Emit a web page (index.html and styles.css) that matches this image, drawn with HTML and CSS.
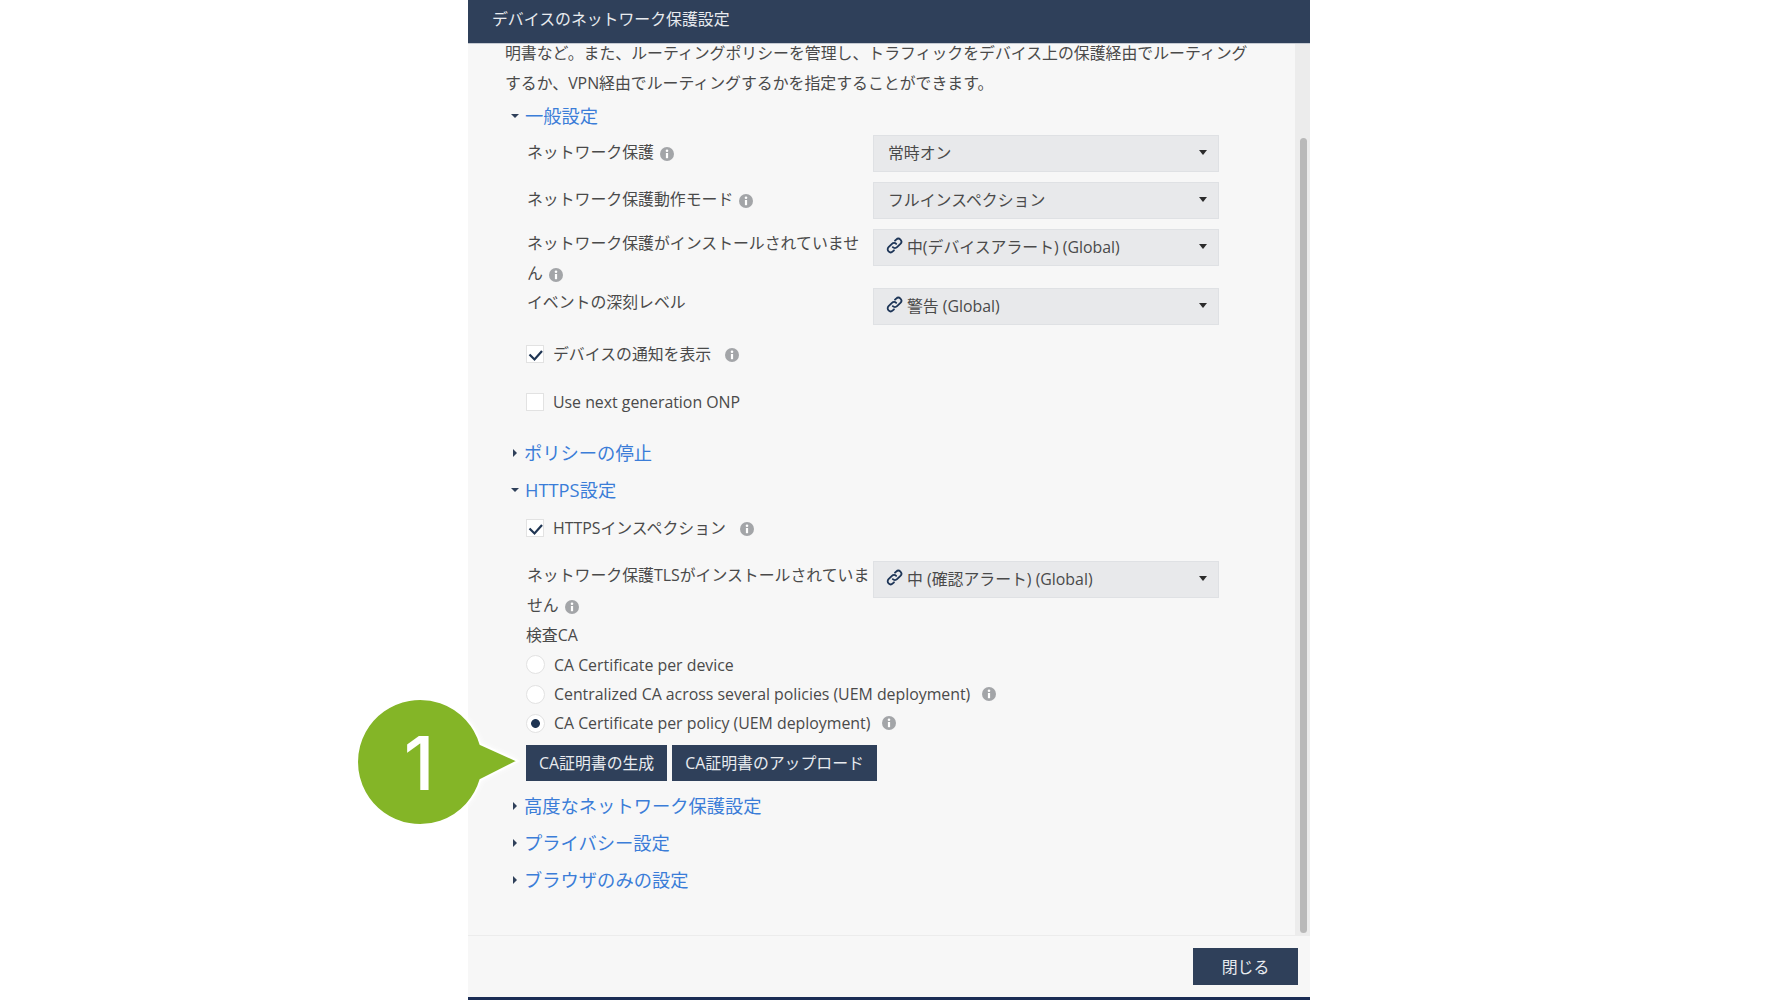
FILE: index.html
```html
<!DOCTYPE html>
<html lang="ja">

<head>
  <meta charset="UTF-8" />
  <title>デバイスのネットワーク保護設定</title>
  <link rel="stylesheet" href="styles.css">
</head>

<body>
  <svg class="sprite" width="0" height="0">
    <symbol id="info" viewBox="0 0 14 14">
      <circle cx="7" cy="7" r="7" fill="#a3a5a8" />
      <circle cx="7" cy="3.8" r="1.3" fill="#fff" />
      <rect x="5.9" y="6" width="2.2" height="5.2" fill="#fff" />
    </symbol>
    <symbol id="link" viewBox="0 0 16 16">
      <g fill="none" stroke="#1d3557" stroke-width="1.7" stroke-linecap="round">
        <path d="M6.4 9.6a2.8 2.8 0 0 0 4 0l3.2-3.2a2.8 2.8 0 0 0-4-4l-1.1 1.1" />
        <path d="M9.6 6.4a2.8 2.8 0 0 0-4 0l-3.2 3.2a2.8 2.8 0 0 0 4 4l1.1-1.1" />
      </g>
    </symbol>
    <symbol id="check" viewBox="0 0 16 16">
      <path d="M2.5 8.5L7.5 13.5L15 5" fill="none" stroke="#1f3553" stroke-width="2.2" />
    </symbol>
  </svg>

  <div class="dialog">
    <div class="dialog-header">デバイスのネットワーク保護設定</div>

    <div class="dialog-body">
      <div class="scroll-content">
        <p class="intro">明書など。また、ルーティングポリシーを管理し、トラフィックをデバイス上の保護経由でルーティング<br>するか、VPN経由でルーティングするかを指定することができます。</p>

        <div class="section-head"><span class="caret-open"></span><a>一般設定</a></div>

        <div class="form-row">
          <div class="form-label form-label-center">ネットワーク保護 <svg class="info"><use href="#info" /></svg></div>
          <div class="select"><span class="select-text">常時オン</span></div>
        </div>
        <div class="form-row">
          <div class="form-label form-label-center">ネットワーク保護動作モード <svg class="info"><use href="#info" /></svg></div>
          <div class="select"><span class="select-text">フルインスペクション</span></div>
        </div>
        <div class="form-row">
          <div class="form-label">ネットワーク保護がインストールされていません <svg class="info"><use href="#info" /></svg></div>
          <div class="select"><svg class="link-icon"><use href="#link" /></svg><span class="select-text">中(デバイスアラート) (Global)</span></div>
        </div>
        <div class="form-row">
          <div class="form-label">イベントの深刻レベル</div>
          <div class="select"><svg class="link-icon"><use href="#link" /></svg><span class="select-text">警告 (Global)</span></div>
        </div>

        <div class="check-row">
          <span class="checkbox"><svg><use href="#check" /></svg></span>
          <span>デバイスの通知を表示</span>
          <svg class="info info-wide"><use href="#info" /></svg>
        </div>
        <div class="check-row">
          <span class="checkbox"></span>
          <span>Use next generation ONP</span>
        </div>

        <div class="section-head section-gap"><span class="caret-closed"></span><a>ポリシーの停止</a></div>
        <div class="section-head"><span class="caret-open"></span><a>HTTPS設定</a></div>

        <div class="check-row">
          <span class="checkbox"><svg><use href="#check" /></svg></span>
          <span>HTTPSインスペクション</span>
          <svg class="info info-wide"><use href="#info" /></svg>
        </div>

        <div class="form-row form-row-tls">
          <div class="form-label">ネットワーク保護TLSがインストールされていません <svg class="info"><use href="#info" /></svg></div>
          <div class="select"><svg class="link-icon"><use href="#link" /></svg><span class="select-text">中 (確認アラート) (Global)</span></div>
        </div>

        <div class="radio-title">検査CA</div>
        <div class="radio-row"><span class="radio"></span><span>CA Certificate per device</span></div>
        <div class="radio-row"><span class="radio"></span><span>Centralized CA across several policies (UEM deployment)</span><svg class="info info-radio"><use href="#info" /></svg></div>
        <div class="radio-row"><span class="radio radio-on"></span><span>CA Certificate per policy (UEM deployment)</span><svg class="info info-radio"><use href="#info" /></svg></div>

        <div class="button-row">
          <button class="btn">CA証明書の生成</button>
          <button class="btn">CA証明書のアップロード</button>
        </div>

        <div class="section-head"><span class="caret-closed"></span><a>高度なネットワーク保護設定</a></div>
        <div class="section-head"><span class="caret-closed"></span><a>プライバシー設定</a></div>
        <div class="section-head"><span class="caret-closed"></span><a>ブラウザのみの設定</a></div>
      </div>

      <div class="scrollbar"><div class="scrollbar-thumb"></div></div>
    </div>

    <div class="dialog-footer">
      <button class="btn btn-close">閉じる</button>
    </div>

    <!-- 手順の吹き出し -->
    <svg class="callout" width="170" height="136" viewBox="0 0 170 136">
      <path class="callout-shape" d="M128.4 50L166 67L128.4 86A63 63 0 1 1 128.4 50z" />
      <text class="callout-num" x="67" y="96" text-anchor="middle">1</text>
    </svg>
  </div>
</body>

</html>
```

FILE: styles.css
```css
* {
  box-sizing: border-box;
}

body {
  margin: 0;
  height: 1000px;
  overflow: hidden;
  background: #fff;
  font-family: 'Open Sans', 'Noto Sans CJK JP', sans-serif;
  font-size: 15.9px;
  letter-spacing: -0.02px;
  line-height: 30px;
  color: #4a4a4a;
}

.sprite {
  position: absolute;
}

.dialog {
  position: relative;
  width: 842px;
  height: 1000px;
  margin-left: 468px;
  display: flex;
  flex-direction: column;
  background: #f7f7f7;
  border-bottom: 3px solid #1b2d55;
}

.dialog-header {
  position: relative;
  z-index: 1;
  flex: none;
  height: 44px;
  padding: 4px 24px 0;
  background: #2f405a;
  border-bottom: 1px solid #c5cad2;
  color: #e8ebef;
}

.dialog-body {
  flex: 1;
  display: flex;
  min-height: 0;
  border-bottom: 1px solid #ececec;
}

.scroll-content {
  flex: 1;
  margin-top: -6px;
  padding-left: 37px;
}

.scrollbar {
  flex: none;
  width: 15px;
  padding: 94px 3px 2px 5px;
  background: #ececec;
}

.scrollbar-thumb {
  height: 100%;
  border-radius: 4px;
  background: #b9b9b9;
}

.intro {
  margin: 0;
}

.section-head {
  display: flex;
  align-items: center;
  height: 37px;
  padding-bottom: 1px;
  font-size: 18.3px;
  letter-spacing: 0;
  color: #3b7dd8;
}

.section-gap {
  margin-top: 14px;
}

.caret-open,
.caret-closed {
  flex: none;
  width: 0;
  height: 0;
  border-style: solid;
}

.caret-open {
  margin: 0 6px 0 6px;
  border-width: 4px 4px 0;
  border-color: #2f405a transparent transparent;
}

.caret-closed {
  margin: 0 7px 0 8px;
  border-width: 4px 0 4px 4px;
  border-color: transparent transparent transparent #2f405a;
}

.form-row {
  display: flex;
}

.form-row-tls {
  margin-top: 14px;
}

.form-label {
  width: 346px;
  margin-left: 22px;
  margin-top: -1px;
  flex: none;
}

.form-label-center {
  margin-top: 2px;
}

.select {
  position: relative;
  display: flex;
  align-items: center;
  width: 346px;
  height: 37px;
  margin-bottom: 10px;
  padding: 0 0 2px 14px;
  background: #e8e9eb;
  border: 1px solid #dfe1e4;
}

.select::after {
  content: "";
  position: absolute;
  right: 11px;
  top: 14px;
  border-style: solid;
  border-width: 5px 4.5px 0;
  border-color: #2b2b2b transparent transparent;
}

.link-icon {
  flex: none;
  width: 17px;
  height: 17px;
  margin-left: -2px;
  margin-right: 4px;
  margin-top: -2px;
}

.info {
  width: 14px;
  height: 14px;
  margin-left: 2px;
  vertical-align: -3px;
}

.info-wide {
  margin-left: 14px;
}

.info-radio {
  margin-left: 12px;
}

.check-row {
  display: flex;
  align-items: center;
  height: 38px;
  margin-bottom: 10px;
  margin-left: 21px;
}

.check-row .info {
  margin-top: 2px;
}

.checkbox {
  flex: none;
  width: 18px;
  height: 18px;
  margin-right: 9px;
  background: #fff;
  border: 1px solid #e2e2e2;
}

.checkbox svg {
  display: block;
  width: 16px;
  height: 16px;
  overflow: visible;
}

.radio-title {
  margin-left: 21px;
}

.radio-row {
  display: flex;
  align-items: center;
  height: 29.4px;
  margin-left: 21px;
}

.radio {
  flex: none;
  width: 19px;
  height: 19px;
  margin-right: 9px;
  border-radius: 50%;
  background: #fff;
  border: 1px solid #e2e2e2;
}

.radio-on {
  background: radial-gradient(circle, #1f3553 0, #1f3553 4px, #fff 4.8px);
}

.button-row {
  display: flex;
  gap: 5px;
  margin: 7px 0 7px 21px;
}

.btn {
  height: 36px;
  padding: 0 13px;
  border: none;
  background: #2f405a;
  color: #e8ebef;
  font: inherit;
  letter-spacing: inherit;
}

.dialog-footer {
  flex: none;
  display: flex;
  justify-content: flex-end;
  height: 61px;
  padding: 12px 12px 0 0;
}

.btn-close {
  width: 105px;
  height: 37px;
  padding: 0;
}

.callout {
  position: absolute;
  left: -116px;
  top: 694px;
  overflow: visible;
}

.callout-shape {
  fill: #84b527;
  stroke: #fff;
  stroke-width: 2;
  filter: drop-shadow(0 0 3px rgba(255, 255, 255, 0.9));
}

.callout-num {
  fill: #fff;
  font-family: 'Inter', sans-serif;
  font-weight: 500;
  font-size: 74px;
}
```
